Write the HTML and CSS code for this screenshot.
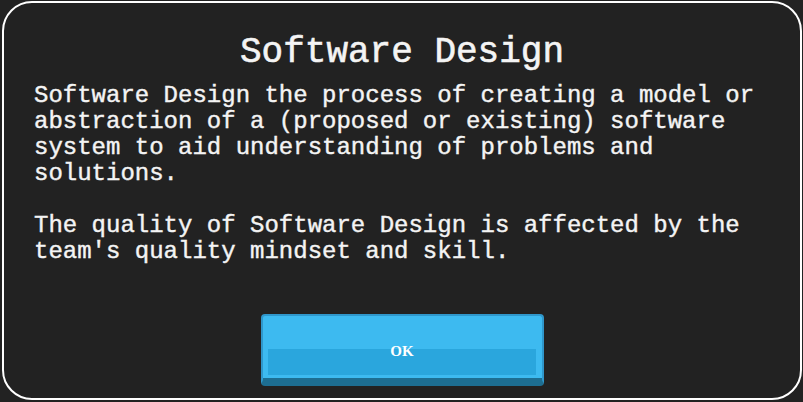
FILE: index.html
```html
<!DOCTYPE html>
<html>
<head>
<meta charset="utf-8">
<link rel="stylesheet" href="styles.css">
</head>
<body>
<div class="dialog">
  <h1 class="title">Software Design</h1>
  <div class="body">
    <p class="para">Software Design the process of creating a model or abstraction of a (proposed or existing) software system to aid understanding of problems and solutions.</p>
    <p class="para">The quality of Software Design is affected by the team's quality mindset and skill.</p>
  </div>
  <div class="actions">
    <button class="ok">
      <span class="band"></span>
      <span class="label">OK</span>
    </button>
  </div>
</div>
</body>
</html>
```
FILE: styles.css
```css
html, body {
  margin: 0;
  padding: 0;
  background: #222222;
  height: 100%;
}
.dialog {
  box-sizing: border-box;
  margin: 1px 1px 2px 2px;
  height: calc(100vh - 3px);
  border: 2px solid #ffffff;
  border-radius: 30px;
  display: flex;
  flex-direction: column;
  padding: 0 30px 12px 30px;
  font-family: "Liberation Mono", "Courier New", monospace;
  color: #f4f4f4;
}
.title {
  margin: 30px 0 0;
  font-size: 36px;
  line-height: 40px;
  font-weight: normal;
  -webkit-text-stroke: 0.6px #f4f4f4;
  text-align: center;
}
.body {
  margin-top: 10px;
}
.para {
  margin: 0 0 26px;
  font-size: 24px;
  line-height: 26px;
  font-weight: normal;
  -webkit-text-stroke: 0.4px #f4f4f4;
}
.actions {
  margin-top: auto;
  display: flex;
  justify-content: center;
}
.ok {
  position: relative;
  box-sizing: border-box;
  width: 283px;
  height: 72px;
  padding: 30px 6px 0 5px;
  background: #3dbaf0;
  border: none;
  border-top: 2px solid #2f97cb;
  border-left: 2px solid #2f97cb;
  border-right: 2px solid #2f97cb;
  border-bottom: 8px solid #1d6e92;
  border-radius: 4px;
  display: block;
}
.band {
  display: block;
  height: 26px;
  background: #2aa6dd;
}
.label {
  position: absolute;
  left: 0;
  right: 0;
  top: 0;
  bottom: -8px;
  display: flex;
  align-items: center;
  justify-content: center;
  font-family: "Liberation Serif", "Times New Roman", serif;
  font-weight: bold;
  font-size: 15px;
  color: #ffffff;
}
```
